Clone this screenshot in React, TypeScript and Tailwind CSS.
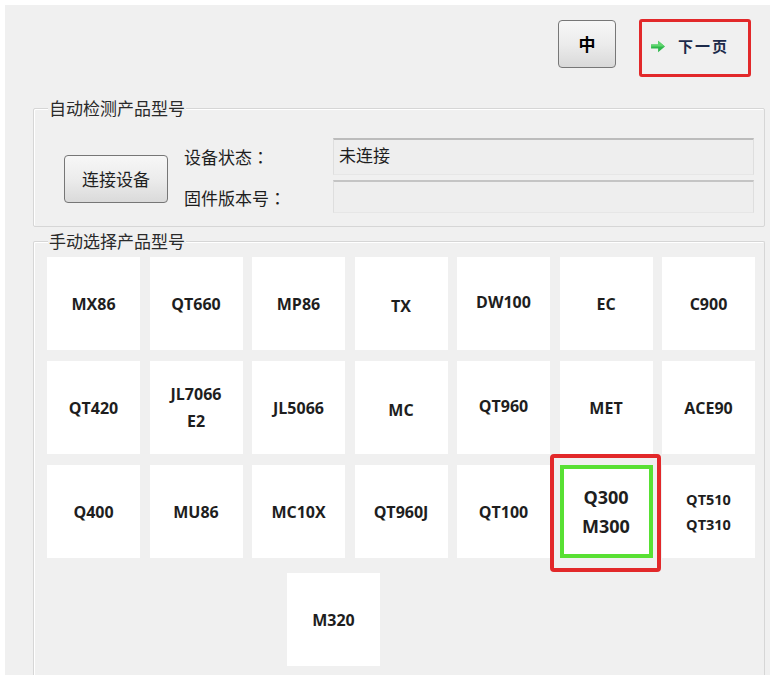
import React from 'react';

type Model = {
  lines: string[];
  size?: string;
  lead?: string;
  shift?: string;
  selected?: boolean;
};

const models: Model[] = [
  { lines: ['MX86'] },
  { lines: ['QT660'] },
  { lines: ['MP86'] },
  { lines: ['TX'], shift: 'translate-y-[2px]' },
  { lines: ['DW100'], shift: '-translate-y-[2px]' },
  { lines: ['EC'] },
  { lines: ['C900'] },
  { lines: ['QT420'] },
  { lines: ['JL7066', 'E2'], lead: 'leading-[27px]' },
  { lines: ['JL5066'] },
  { lines: ['MC'], shift: 'translate-y-[2px]' },
  { lines: ['QT960'], shift: '-translate-y-[2px]' },
  { lines: ['MET'] },
  { lines: ['ACE90'] },
  { lines: ['Q400'] },
  { lines: ['MU86'] },
  { lines: ['MC10X'] },
  { lines: ['QT960J'] },
  { lines: ['QT100'] },
  { lines: ['Q300', 'M300'], size: 'text-[18px]', lead: 'leading-[29px]', selected: true },
  { lines: ['QT510', 'QT310'], size: 'text-[14.5px]', lead: 'leading-[25px]' },
];

const cjk = "font-['Noto_Sans_CJK_SC',sans-serif]";
const latin = "font-['Open_Sans','Noto_Sans_CJK_SC',sans-serif]";

function Tile({ model }: { model: Model }) {
  return (
    <div
      className={`relative w-[93px] h-[93px] bg-white flex items-center justify-center text-center text-[#1e1e1e] font-bold ${latin} ${
        model.size ?? 'text-[16px]'
      } ${model.lead ?? 'leading-[22px]'} ${model.selected ? 'border-[4px] border-[#58e033]' : ''}`}
    >
      <div className={model.shift ?? ''}>
        {model.lines.map((l) => (
          <div key={l}>{l}</div>
        ))}
      </div>
      {model.selected && (
        <div className="absolute -left-[14px] -right-[12px] -top-[15px] -bottom-[18px] border-[4px] border-[#e2282a] rounded-[4px]" />
      )}
    </div>
  );
}

function GroupTitle({ text }: { text: string }) {
  return (
    <span className={`absolute -top-[12px] left-[14px] px-[1px] bg-[#f0f0f0] text-[17px] leading-[22px] text-[#2a2a2a] ${cjk}`}>
      {text}
    </span>
  );
}

function Label({ text, extra }: { text: string; extra?: string }) {
  return (
    <span className={`w-[149px] text-[17px] text-[#1e1e1e] ${cjk} ${extra ?? ''}`}>
      {text}
      <span className="font-['Noto_Sans_CJK_TC',sans-serif]">：</span>
    </span>
  );
}

export default function App() {
  return (
    <div className="w-[777px] h-[684px] bg-white pl-[5px] pt-[5px] overflow-hidden">
      <div className="w-[765px] h-[670px] bg-[#f0f0f0] flex flex-col">
        {/* Top buttons */}
        <div className="h-[103px] flex justify-end items-start pt-[14px] pr-[19px] gap-[23px]">
          <button
            className={`mt-[1px] w-[58px] h-[48px] border border-[#777] rounded-[4px] bg-gradient-to-b from-[#f7f7f7] via-[#ececec] to-[#d9d9d9] text-[17px] font-bold text-black ${cjk}`}
          >
            中
          </button>
          <div className="w-[112px] h-[58px] border-[3px] border-[#e2282a] rounded-[3px] flex items-center pl-[8px] pb-[3px]">
            <svg width="16" height="13" viewBox="0 0 15 12" className="mr-[12px]">
              <path d="M1 4.2h6.6V0.6L14 6l-6.4 5.4V7.8H1z" fill="#2eb84a" />
              <path d="M1 4.2h6.6V0.6L14 6H1z" fill="#5fd56e" />
            </svg>
            <span className={`text-[15px] font-bold tracking-[2px] text-[#1c2a4a] ${cjk}`}>下一页</span>
          </div>
        </div>

        {/* Auto detect group */}
        <div className="relative ml-[28px] mr-[5px] h-[119px] border border-[#d6d6d6] rounded-[2px] shadow-[inset_1px_1px_0_#ffffff]">
          <GroupTitle text="自动检测产品型号" />
          <div className="flex items-start pt-[29px] pl-[30px] pr-[10px] gap-[16px]">
            <button
              className={`mt-[17px] w-[104px] h-[48px] border border-[#767676] rounded-[4px] bg-gradient-to-b from-[#f7f7f7] via-[#ececec] to-[#dadada] text-[17px] text-[#1e1e1e] ${cjk}`}
            >
              连接设备
            </button>
            <div className="flex-1 flex flex-col gap-[5px]">
              <div className="h-[37px] flex items-center">
                <Label text="设备状态" />
                <div
                  className={`flex-1 h-full flex items-center pl-[5px] pb-[4px] bg-[#eeeeee] border-t-2 border-t-[#bcbcbc] border-x border-x-[#dedede] border-b border-b-[#e6e6e6] text-[17px] text-[#1e1e1e] ${cjk}`}
                >
                  未连接
                </div>
              </div>
              <div className="h-[33px] flex items-center">
                <Label text="固件版本号" extra="pt-[3px]" />
                <div className="flex-1 h-full bg-[#eeeeee] border-t-2 border-t-[#c4c4c4] border-x border-x-[#dedede] border-b border-b-[#e6e6e6]" />
              </div>
            </div>
          </div>
        </div>

        {/* Manual select group */}
        <div className="relative ml-[28px] mr-[5px] mt-[14px] flex-1 border-t border-x border-[#d6d6d6] rounded-t-[2px] shadow-[inset_1px_1px_0_#ffffff]">
          <GroupTitle text="手动选择产品型号" />
          <div className="pt-[15px] pl-[13px]">
            <div className="grid grid-cols-[repeat(7,93px)] gap-x-[9.5px] gap-y-[11px]">
              {models.map((m) => (
                <Tile key={m.lines.join('-')} model={m} />
              ))}
            </div>
            <div className="mt-[15px] pl-[240px]">
              <Tile model={{ lines: ['M320'] }} />
            </div>
          </div>
        </div>
      </div>
    </div>
  );
}
